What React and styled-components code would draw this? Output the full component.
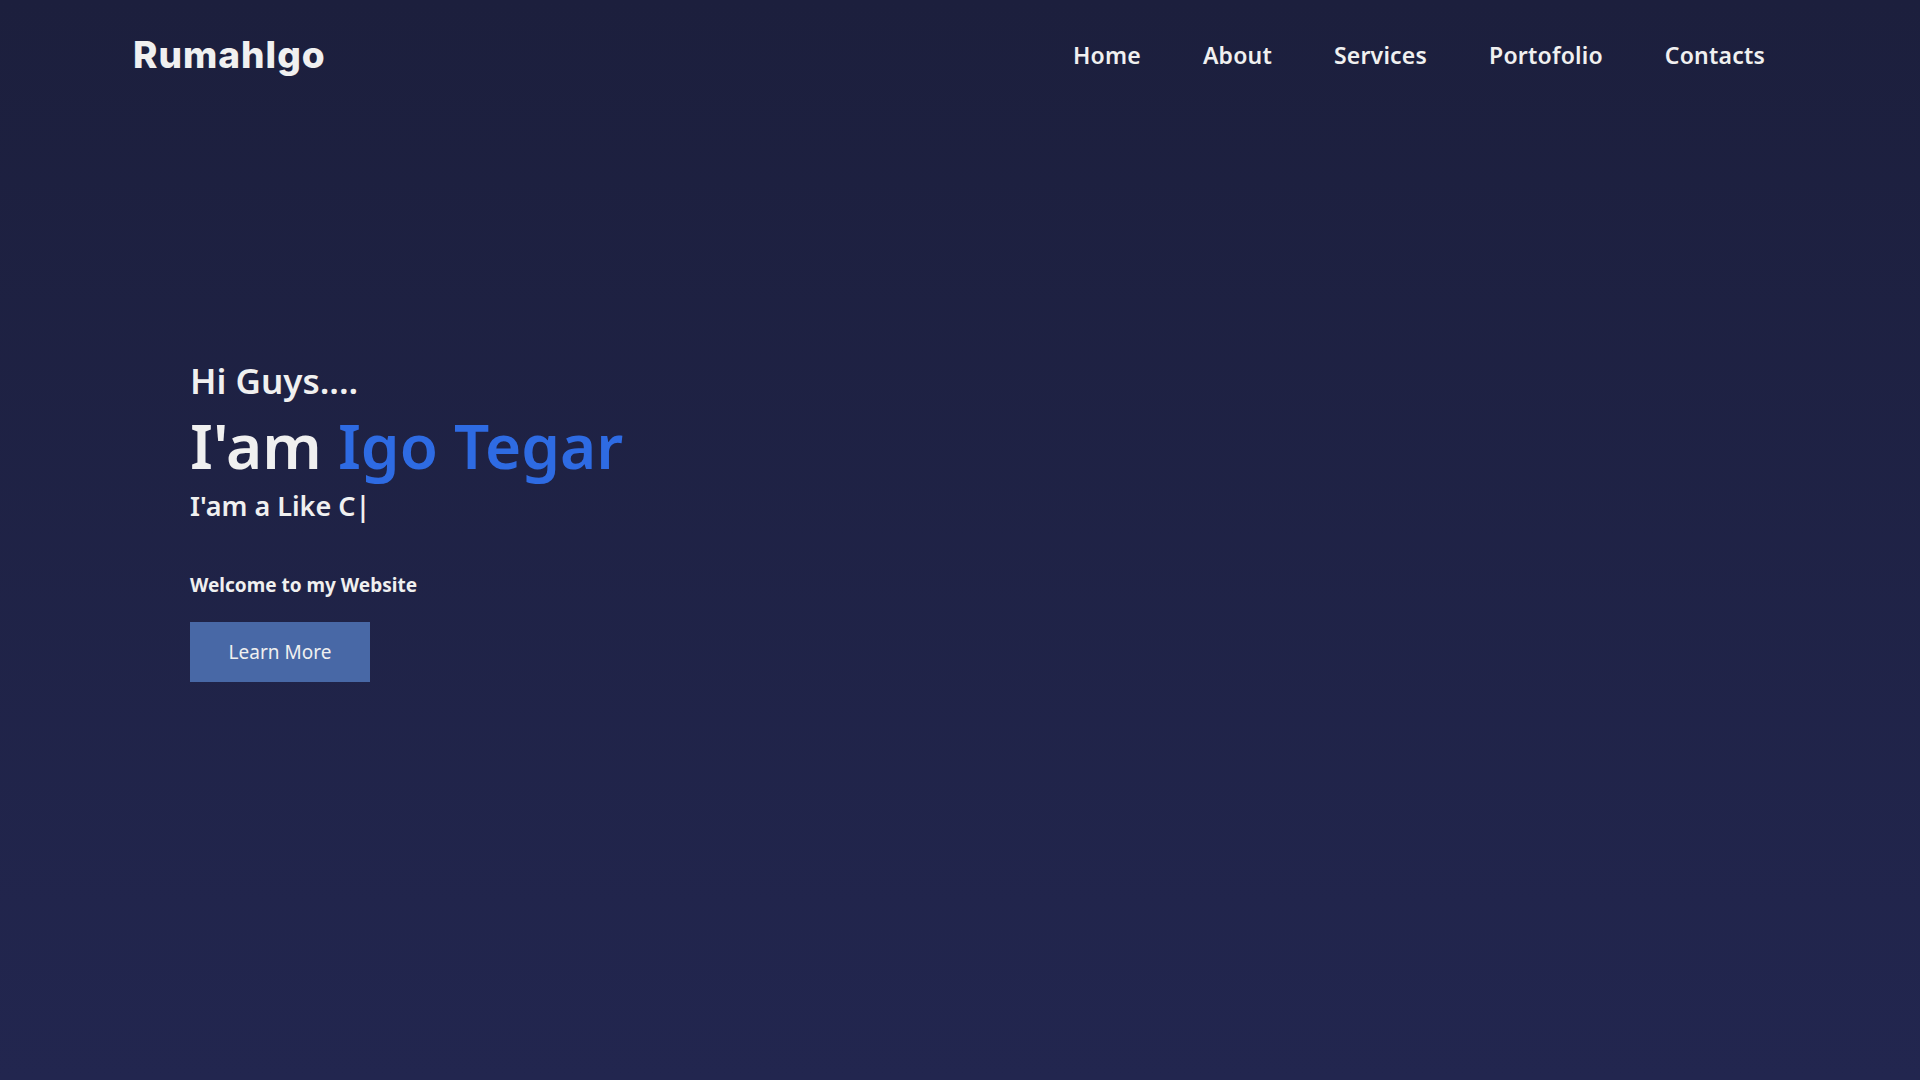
import React from 'react'
import styled, { createGlobalStyle } from 'styled-components'

const GlobalStyle = createGlobalStyle`
  * { box-sizing: border-box; }
  body {
    margin: 0;
    background: #22264f;
    font-family: "Noto Sans", "Open Sans", sans-serif;
    color: #f0f0f0;
  }
`

const Hero = styled.section`
  min-height: 100vh;
  display: flex;
  flex-direction: column;
  background: linear-gradient(180deg, #1c1f3d 0%, #22264f 100%);
`

const Header = styled.header`
  display: flex;
  align-items: center;
  justify-content: space-between;
  padding: 32px 155px 0 133px;
`

const Logo = styled.a`
  font-family: "Inter", sans-serif;
  font-weight: 800;
  font-size: 37px;
  letter-spacing: 1px;
  color: #f0f0f0;
  text-decoration: none;
`

const NavList = styled.ul`
  display: flex;
  gap: 62px;
  margin: 0;
  padding: 0;
  list-style: none;
`

const NavLink = styled.a`
  font-size: 23px;
  font-weight: 600;
  letter-spacing: 0.2px;
  color: #f0f0f0;
  text-decoration: none;
`

const Intro = styled.div`
  flex: 1;
  display: flex;
  flex-direction: column;
  align-items: flex-start;
  padding: 283px 0 0 190px;
`

const Greeting = styled.h3`
  margin: 0;
  font-size: 35px;
  font-weight: 600;
  line-height: 1.2;
`

const Title = styled.h1`
  margin: 8px 0 0;
  font-size: 62px;
  font-weight: 600;
  line-height: 1.15;
  span { color: #2e6be3; }
`

const Typing = styled.h2`
  margin: 9px 0 0;
  font-size: 27px;
  font-weight: 600;
  line-height: 1.2;
`

const Welcome = styled.p`
  margin: 49px 0 0;
  font-size: 19px;
  font-weight: 700;
`

const Button = styled.a`
  margin-top: 24px;
  display: flex;
  align-items: center;
  justify-content: center;
  width: 180px;
  height: 60px;
  background: #4868a6;
  color: #f0f0f0;
  font-size: 19px;
  text-decoration: none;
`

const Section = styled.section`
  min-height: 1900px;
`

const links = ['Home', 'About', 'Services', 'Portofolio', 'Contacts']

export default function App() {
  return (
    <>
      <GlobalStyle />
      <Hero id="home">
        <Header>
          <Logo href="#home">RumahIgo</Logo>
          <NavList>
            {links.map((l) => (
              <li key={l}>
                <NavLink href={'#' + l.toLowerCase()}>{l}</NavLink>
              </li>
            ))}
          </NavList>
        </Header>
        <Intro>
          <Greeting>Hi Guys....</Greeting>
          <Title>I'am <span>Igo Tegar</span></Title>
          <Typing>I'am a Like C|</Typing>
          <Welcome>Welcome to my Website</Welcome>
          <Button href="#about">Learn More</Button>
        </Intro>
      </Hero>
      <Section id="about" />
      <Section id="services" />
      <Section id="portofolio" />
      <Section id="contacts" />
    </>
  )
}
